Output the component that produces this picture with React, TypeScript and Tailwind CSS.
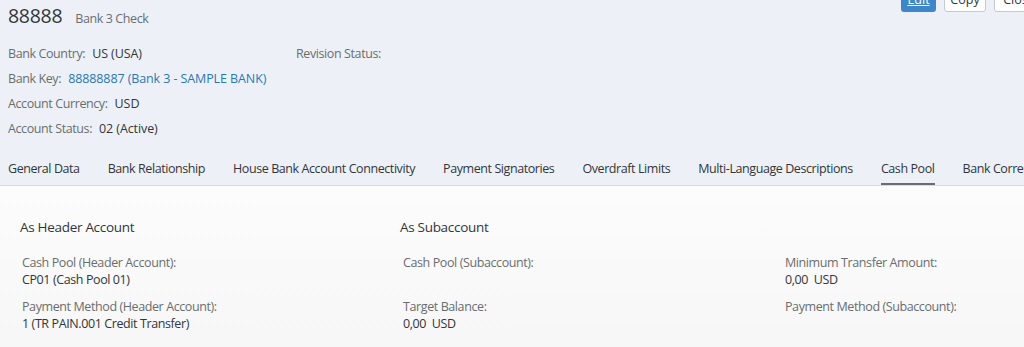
import React from "react";

const font = { fontFamily: '"Open Sans", "Noto Sans", Arial, sans-serif' };

function Field({ label, value }: { label: string; value?: React.ReactNode }) {
  return (
    <div className="flex flex-col h-[44px]">
      <div className="text-[12.5px] leading-[17px] tracking-[-0.4px] text-[#6a6d70]">{label}</div>
      {value !== undefined && (
        <div className="text-[12.5px] leading-[17px] tracking-[-0.4px] text-[#32363a]">{value}</div>
      )}
    </div>
  );
}

function Info({ label, value, link }: { label: string; value: string; link?: boolean }) {
  return (
    <div className="leading-[17px] whitespace-nowrap">
      <span className="text-[#6a6d70] tracking-[-0.4px]">{label}</span>
      <span className={"ml-[7px] tracking-[-0.1px] " + (link ? "text-[#2a77b8]" : "text-[#32363a]")}>{value}</span>
    </div>
  );
}

export default function App() {
  const tabs = [
    "General Data",
    "Bank Relationship",
    "House Bank Account Connectivity",
    "Payment Signatories",
    "Overdraft Limits",
    "Multi-Language Descriptions",
    "Cash Pool",
    "Bank Correspondence",
  ];
  return (
    <div className="w-[1024px] h-[347px] overflow-hidden bg-[#f7f7f7]" style={font}>
      <div className="bg-[#edf1f7]">
        <div className="relative h-[40px] pl-[8px] pt-[2px] flex items-baseline">
          <span className="text-[19.5px] leading-[28px] tracking-[-0.3px] text-[#32363a]">88888</span>
          <span className="ml-[13px] text-[12.5px] tracking-[-0.4px] text-[#6a6d70]">Bank 3 Check</span>
          <div className="absolute top-[-12px] left-[901px] flex gap-[8px]">
            <div className="w-[35px] h-[24px] rounded-[3px] bg-[#3d87c8] text-white text-[12.5px] leading-[24px] text-center underline">Edit</div>
            <div className="w-[42px] h-[24px] rounded-[3px] bg-white border border-[#c6cbd1] text-[#32363a] text-[12.5px] leading-[22px] text-center">Copy</div>
            <div className="w-[50px] h-[24px] rounded-[3px] bg-white border border-[#c6cbd1] text-[#32363a] text-[12.5px] leading-[22px] text-center">Close</div>
          </div>
        </div>
        <div className="flex pl-[8px] pt-[5px] text-[12.5px]">
          <div className="w-[288px] flex flex-col gap-[8px]">
            <Info label="Bank Country:" value="US (USA)" />
            <Info label="Bank Key:" value="88888887 (Bank 3 - SAMPLE BANK)" link />
            <Info label="Account Currency:" value="USD" />
            <Info label="Account Status:" value="02 (Active)" />
          </div>
          <div className="leading-[17px] text-[#6a6d70] tracking-[-0.4px]">Revision Status:</div>
        </div>
        <div className="flex mt-[18px] pl-[8px] border-b border-[#d8dce1] h-[31px] items-stretch whitespace-nowrap">
          {tabs.map((t) => (
            <div
              key={t}
              className={
                "mr-[28px] text-[12.5px] tracking-[-0.42px] flex items-center border-b-2 pt-[1px] " +
                (t === "Cash Pool" ? "border-[#6a6d70] text-[#32363a]" : "border-transparent text-[#32363a]")
              }
            >
              {t}
            </div>
          ))}
        </div>
      </div>
      <div className="bg-gradient-to-b from-[#fcfcfc] to-[#f7f7f7] pt-[32px]">
        <div className="flex">
          <div className="w-[400px] pl-[20px]">
            <div className="text-[13.5px] leading-[18px] tracking-[-0.3px] text-[#32363a]">As Header Account</div>
            <div className="pl-[2px] mt-[18px]">
              <Field label="Cash Pool (Header Account):" value="CP01 (Cash Pool 01)" />
              <Field label="Payment Method (Header Account):" value="1 (TR PAIN.001 Credit Transfer)" />
            </div>
          </div>
          <div className="w-[385px]">
            <div className="text-[13.5px] leading-[18px] tracking-[-0.3px] text-[#32363a]">As Subaccount</div>
            <div className="pl-[3px] mt-[18px]">
              <Field label="Cash Pool (Subaccount):" />
              <Field label="Target Balance:" value={<span>0,00&nbsp;&nbsp;USD</span>} />
            </div>
          </div>
          <div className="flex-1">
            <div className="h-[18px]" />
            <div className="mt-[18px]">
              <Field label="Minimum Transfer Amount:" value={<span>0,00&nbsp;&nbsp;USD</span>} />
              <Field label="Payment Method (Subaccount):" />
            </div>
          </div>
        </div>
      </div>
    </div>
  );
}
